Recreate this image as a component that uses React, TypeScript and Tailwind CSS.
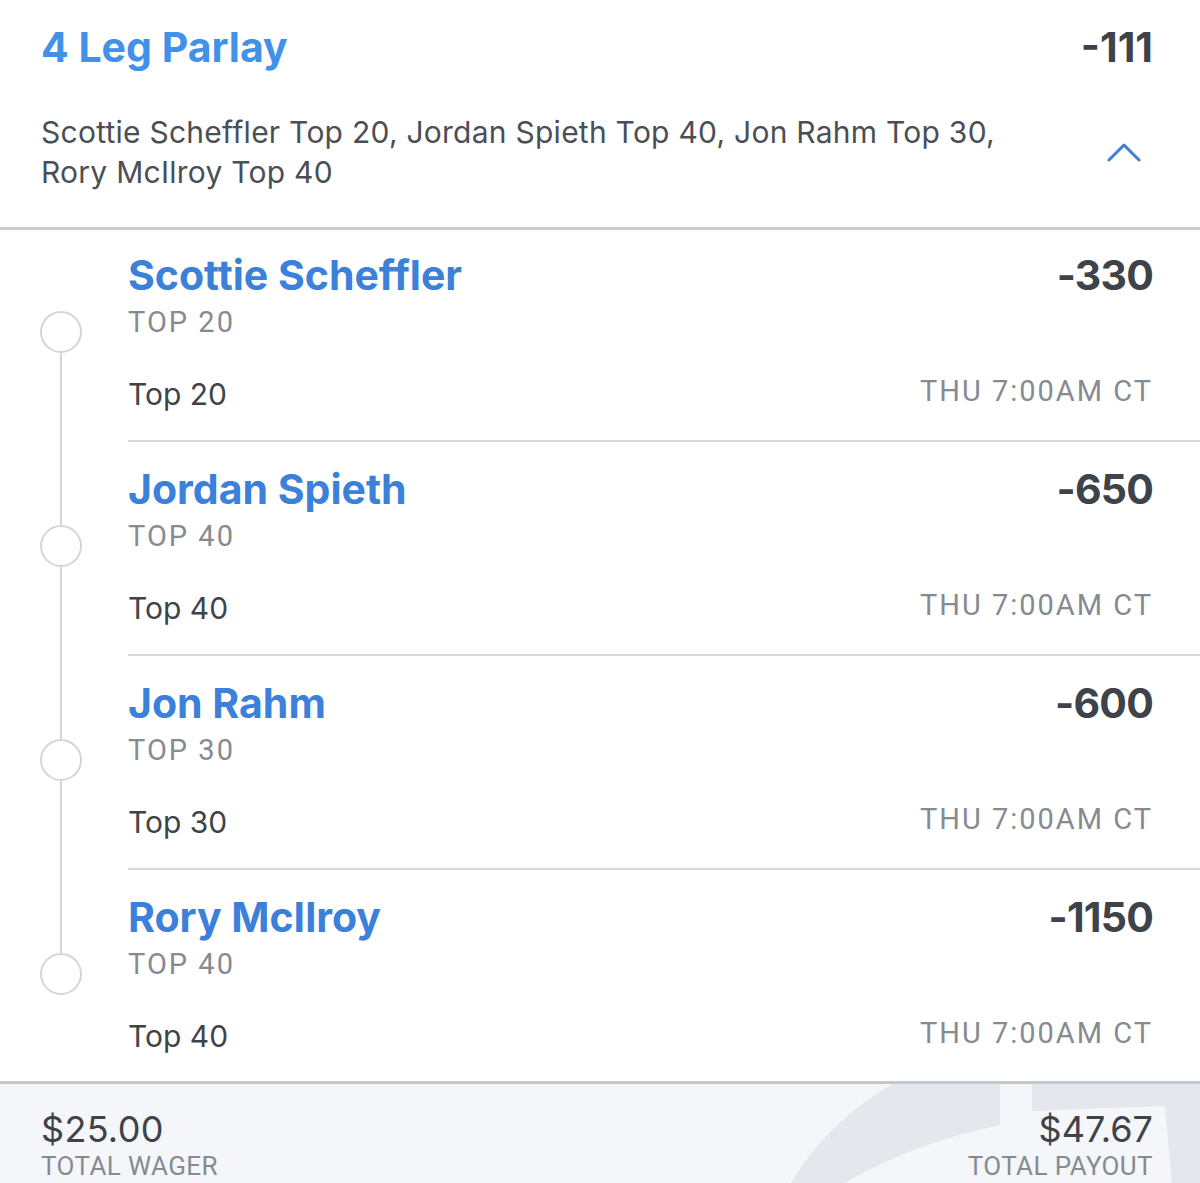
const legs = [
  { name: "Scottie Scheffler", odds: "-330", market: "TOP 20", pick: "Top 20" },
  { name: "Jordan Spieth", odds: "-650", market: "TOP 40", pick: "Top 40" },
  { name: "Jon Rahm", odds: "-600", market: "TOP 30", pick: "Top 30" },
  { name: "Rory McIlroy", odds: "-1150", market: "TOP 40", pick: "Top 40" },
];

const sans = "font-['Inter','Lato',sans-serif]";
const label = "font-['Roboto','Liberation_Sans',sans-serif]";

function Leg({ leg, first, last }: { leg: (typeof legs)[number]; first: boolean; last: boolean }) {
  return (
    <div className="flex">
      <div className="w-[128px] shrink-0">
        <div className="ml-[40px] w-[42px] h-full flex flex-col items-center">
          <div className={`w-[2px] ${first ? "h-[81px]" : "h-[83px] bg-[#d3d6d9]"}`} />
          <div className="w-[42px] h-[42px] rounded-full border-2 border-[#d3d6d9] shrink-0" />
          <div className={`w-[2px] flex-1 ${last ? "" : "bg-[#d3d6d9]"}`} />
        </div>
      </div>
      <div
        className={`flex-1 pr-[47px] ${first ? "pt-[21px]" : "pt-[23px]"} ${last ? "pb-[27px]" : "pb-[28px] border-b-2 border-[#d5dade]"}`}
      >
        <div className="flex justify-between items-baseline h-[48px]">
          <div className="text-[41px] leading-[48px] font-bold text-[#3b80d9]">{leg.name}</div>
          <div className="text-[41px] leading-[48px] font-bold tracking-[-0.8px] text-[#3e4349]">{leg.odds}</div>
        </div>
        <div className={`${label} mt-[6px] text-[29px] leading-[34px] tracking-[2px] text-[#868b91]`}>
          {leg.market}
        </div>
        <div className="mt-[37px] flex justify-between items-center h-[36px]">
          <div className="text-[30px] leading-[36px] text-[#3e4349]">{leg.pick}</div>
          <div className={`${label} text-[29px] leading-[34px] tracking-[2px] text-[#868b91] -mt-[6px]`}>
            THU 7:00AM CT
          </div>
        </div>
      </div>
    </div>
  );
}

export default function App() {
  return (
    <div className={`${sans} w-[1200px] h-[1183px] bg-white overflow-hidden flex flex-col`}>
      <div className="px-[41px] pr-[47px] pt-[23px] pb-[35px] border-b-[3px] border-[#c9ccd0]">
        <div className="flex justify-between items-baseline h-[48px]">
          <div className="text-[41px] leading-[48px] font-bold text-[#4190ea]">4 Leg Parlay</div>
          <div className="text-[41px] leading-[48px] font-bold text-[#3e4349]">-111</div>
        </div>
        <div className="mt-[41px] flex justify-between items-center">
          <div className="w-[1012px] text-[30px] leading-[40px] tracking-[0.25px] text-[#4a4f55]">
            Scottie Scheffler Top 20, Jordan Spieth Top 40, Jon Rahm Top 30, Rory McIlroy Top 40
          </div>
          <svg width="34" height="20" viewBox="0 0 34 20" className="mr-[12px]">
            <polyline
              points="2,18 17,3 32,18"
              fill="none"
              stroke="#3b80d9"
              strokeWidth="3"
              strokeLinecap="round"
              strokeLinejoin="round"
            />
          </svg>
        </div>
      </div>

      <div>
        {legs.map((leg, i) => (
          <Leg key={leg.name} leg={leg} first={i === 0} last={i === legs.length - 1} />
        ))}
      </div>

      <div className="relative flex-1 overflow-hidden bg-[#f4f6f9] border-t-[3px] border-[#c4c8cc]">
        <svg
          width="440"
          height="100"
          viewBox="0 0 440 100"
          className="absolute right-0 top-0"
        >
          <path d="M30 100 Q70 35 133 0 L240 0 L240 41 Q150 60 83 100 Z" fill="#e4e7eb" />
          <path d="M272 0 L440 0 L440 100 L412 100 L405 22 Q340 24 272 27 Z" fill="#e4e7eb" />
        </svg>
        <div className="relative flex justify-between pl-[41px] pr-[47px] pt-[23px]">
          <div>
            <div className="text-[36px] leading-[44px] tracking-[0.3px] text-[#3e4349]">$25.00</div>
            <div className={`${label} text-[26px] leading-[30px] tracking-[0.4px] text-[#868b91]`}>
              TOTAL WAGER
            </div>
          </div>
          <div className="text-right">
            <div className="text-[36px] leading-[44px] text-[#3e4349]">$47.67</div>
            <div className={`${label} text-[26px] leading-[30px] tracking-[0.4px] text-[#868b91]`}>
              TOTAL PAYOUT
            </div>
          </div>
        </div>
      </div>
    </div>
  );
}
